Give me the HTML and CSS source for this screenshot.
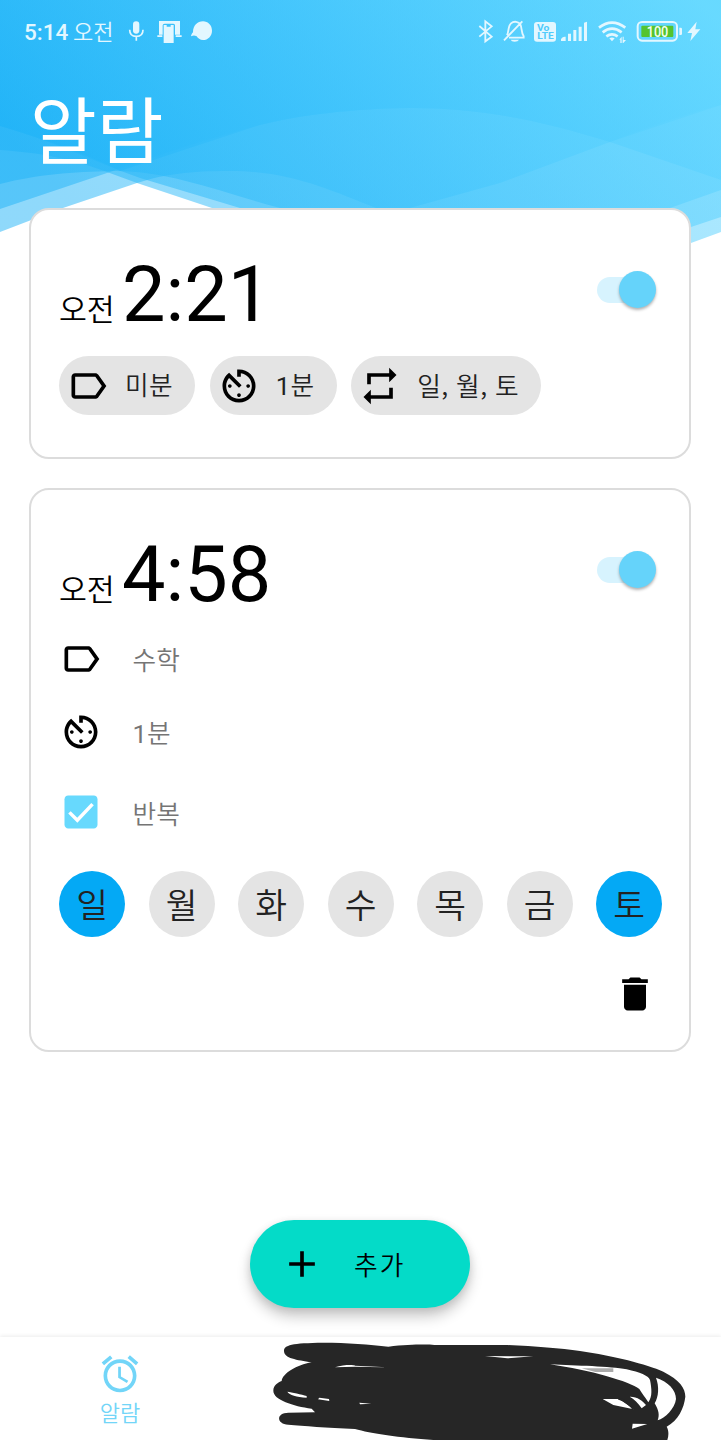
FILE: index.html
```html
<!DOCTYPE html>
<html lang="ko">
<head>
  <meta charset="UTF-8">
  <title>알람</title>
  <link rel="stylesheet" href="styles.css">
</head>
<body>
  <div class="screen">
    <!-- wave background -->
    <svg class="waves" viewBox="0 0 721 246">
      <defs>
        <linearGradient id="sky" gradientUnits="userSpaceOnUse" x1="0" y1="130" x2="415" y2="-285">
          <stop offset="0" stop-color="#20b3f7"/>
          <stop offset="0.5" stop-color="#43c6fc"/>
          <stop offset="1" stop-color="#66d9ff"/>
        </linearGradient>
      </defs>
      <g fill="url(#sky)" fill-opacity="0.5">
        <path d="M0 0H721V190L670 208L560 235H440L376 208C330 190 290 171 230 171C190 171 165 174 137 183L60 209L0 232Z"/>
        <path d="M0 0H721V232L691 243L600 246H300L212 208L137 183L107 172C70 158 40 153 0 150Z"/>
        <path d="M0 0H721V217L691 227L600 240H330L240 208L140 178C90 160 50 140 0 126Z"/>
        <path d="M0 0H721V180L610 142C540 120 480 108 410 108C350 109 300 115 260 125C200 141 160 155 107 173L0 209Z"/>
        <path d="M0 0H721V105C680 115 640 130 610 142L500 183L410 208L345 218L280 208C220 192 170 171 115 171C70 172 40 174 0 184Z"/>
      </g>
      <path fill="url(#sky)" fill-opacity="0.6" d="M0 0H721V105L610 142C540 120 480 108 410 108C350 109 300 115 260 125L120 171C90 155 40 138 0 126Z"/>
    </svg>

    <div class="statusbar">
      <span class="clock">5:14</span>
      <span class="ampm-small">오전</span>
      <svg class="st mic" width="17" height="25" viewBox="384 57 51 75">
        <rect x="399" y="64" width="19" height="37" rx="9.5" fill="currentColor"/>
        <path d="M389 89c0 13 8 20 20 20s20-7 20-20M409 109v13" fill="none" stroke="currentColor" stroke-width="5"/>
      </svg>
      <svg class="st phone" width="25" height="25" viewBox="471 57 75 75">
        <path d="M477 63H540V104H525V76Q525 71 520 71H494Q488 71 488 76V104H477Z" fill="currentColor"/>
        <path d="M472 106H487V111H472ZM527 106H545V111H527Z" fill="currentColor"/>
        <path d="M491 75h9v5h12v-5h9v54h-30z" fill="currentColor"/>
      </svg>
      <svg class="st blob" width="23" height="25" viewBox="570 57 69 75">
        <path d="M609 64c15 0 27 12 27 28s-12 28-27 28c-9 0-15-5-19-11-6-3-10-3-17 0 1-6 3-9 6-12C579 77 592 64 609 64z" fill="currentColor"/>
      </svg>

      <div class="status-right">
        <svg class="st" width="16" height="25" viewBox="354 57 48 75">
          <path d="M358 78L395 110L376 124V64L395 79L358 110" fill="none" stroke="currentColor" stroke-width="5.5"/>
        </svg>
        <svg class="st bell" width="23" height="25" viewBox="429 57 69 75">
          <path d="M441 106C446 98 444 78 453 70C462 62 476 65 481 73C486 82 483 96 491 109V113H447M432 121L487 64" fill="none" stroke="currentColor" stroke-width="5.5"/>
          <path d="M452 119H477Q474 125 464 125T452 119Z" fill="currentColor"/>
        </svg>
        <svg class="st volte" width="23" height="25" viewBox="522 57 69 75">
          <rect x="522" y="66" width="66" height="59" rx="9" fill="currentColor"/>
          <text x="531" y="92" textLength="37" lengthAdjust="spacingAndGlyphs">Vo</text>
          <text x="532" y="118" textLength="49" lengthAdjust="spacingAndGlyphs">LTE</text>
        </svg>
        <svg class="st signal" width="27" height="25" viewBox="603 57 81 75">
          <path d="M603 123v-6q5-7 11-7h3v13zM624 101h9v22h-9zM640 90h9v33h-9zM656 80h9v43h-9zM672 68l9-3v58h-9z" fill="currentColor"/>
        </svg>
        <svg class="st wifi" width="29" height="25" viewBox="714 57 87 75">
          <path d="M717 83Q756 53 796 83M728 97Q756 75 785 97M739 109Q756 97 773 109" fill="none" stroke="currentColor" stroke-width="8"/>
          <path d="M748 115Q756 110 764 115L756 124Z" fill="currentColor"/>
          <path d="M778 119l7-9v19h-4v-10zM788 110h3v10h7l-8 9h-2z" fill="currentColor"/>
        </svg>
        <svg class="st battery" width="47" height="25" viewBox="828 57 141 75">
          <rect x="833" y="66" width="118" height="56" rx="13" fill="none" stroke="currentColor" stroke-width="6"/>
          <rect x="844" y="77" width="96" height="34" rx="3" fill="#54c42f"/>
          <path d="M958 83h4q4 0 4 4v14q0 4-4 4h-4z" fill="currentColor"/>
          <text x="860" y="110" textLength="65" lengthAdjust="spacingAndGlyphs">100</text>
        </svg>
        <svg class="st bolt" width="14" height="25" viewBox="981 57 42 75">
          <path d="M1010 65L982 99H996L991 123L1021 88H1006Z" fill="currentColor"/>
        </svg>
      </div>
    </div>

    <h1 class="title">알람</h1>

    <div class="alarm-list">
      <div class="card card-closed">
        <div class="time-row">
          <span class="ampm">오전</span>
          <span class="time">2:21</span>
          <div class="switch"><div class="thumb"></div></div>
        </div>
        <div class="chips">
          <div class="chip">
            <svg class="icon" viewBox="0 0 24 24"><path d="M17.63 5.84C17.27 5.33 16.67 5 16 5L5 5.01C3.9 5.01 3 5.9 3 7v10c0 1.1.9 1.99 2 1.99L16 19c.67 0 1.27-.33 1.63-.84L22 12l-4.37-6.16zM16 17H5V7h11l3.55 5L16 17z"/></svg>
            <span>미분</span>
          </div>
          <div class="chip">
            <svg class="icon" viewBox="0 0 24 24"><path d="M11 17c0 .55.45 1 1 1s1-.45 1-1-.45-1-1-1-1 .45-1 1zm0-14v4h2V5.08c3.39.49 6 3.39 6 6.92 0 3.87-3.13 7-7 7s-7-3.13-7-7c0-1.68.59-3.22 1.58-4.42L12 13l1.41-1.41-6.8-6.8v.02C4.42 6.45 3 9.05 3 12c0 4.97 4.02 9 9 9 4.97 0 9-4.03 9-9s-4.03-9-9-9h-1zm7 9c0-.55-.45-1-1-1s-1 .45-1 1 .45 1 1 1 1-.45 1-1zM6 12c0 .55.45 1 1 1s1-.45 1-1-.45-1-1-1-1 .45-1 1z"/></svg>
            <span><b class="num">1</b>분</span>
          </div>
          <div class="chip">
            <svg class="icon" viewBox="0 0 24 24"><path d="M7 7h10v3l4-4-4-4v3H5v6h2V7zm10 10H7v-3l-4 4 4 4v-3h12v-6h-2v4z"/></svg>
            <span class="chip-days">일, 월, 토</span>
          </div>
        </div>
      </div>

      <div class="card card-open">
        <div class="time-row">
          <span class="ampm">오전</span>
          <span class="time">4:58</span>
          <div class="switch"><div class="thumb"></div></div>
        </div>
        <div class="options">
          <div class="option">
            <svg class="icon" viewBox="0 0 24 24"><path d="M17.63 5.84C17.27 5.33 16.67 5 16 5L5 5.01C3.9 5.01 3 5.9 3 7v10c0 1.1.9 1.99 2 1.99L16 19c.67 0 1.27-.33 1.63-.84L22 12l-4.37-6.16zM16 17H5V7h11l3.55 5L16 17z"/></svg>
            <span>수학</span>
          </div>
          <div class="option">
            <svg class="icon" viewBox="0 0 24 24"><path d="M11 17c0 .55.45 1 1 1s1-.45 1-1-.45-1-1-1-1 .45-1 1zm0-14v4h2V5.08c3.39.49 6 3.39 6 6.92 0 3.87-3.13 7-7 7s-7-3.13-7-7c0-1.68.59-3.22 1.58-4.42L12 13l1.41-1.41-6.8-6.8v.02C4.42 6.45 3 9.05 3 12c0 4.97 4.02 9 9 9 4.97 0 9-4.03 9-9s-4.03-9-9-9h-1zm7 9c0-.55-.45-1-1-1s-1 .45-1 1 .45 1 1 1 1-.45 1-1zM6 12c0 .55.45 1 1 1s1-.45 1-1-.45-1-1-1-1 .45-1 1z"/></svg>
            <span><b class="num">1</b>분</span>
          </div>
          <div class="option repeat">
            <svg class="icon check" viewBox="0 0 24 24"><path d="M19 3H5c-1.11 0-2 .9-2 2v14c0 1.1.89 2 2 2h14c1.11 0 2-.9 2-2V5c0-1.1-.89-2-2-2z"/><path class="tick" d="M5.7 12.2L10 16.5L18.3 7.7"/></svg>
            <span>반복</span>
          </div>
        </div>
        <div class="days">
          <div class="day on">일</div>
          <div class="day">월</div>
          <div class="day">화</div>
          <div class="day">수</div>
          <div class="day">목</div>
          <div class="day">금</div>
          <div class="day on">토</div>
        </div>
        <div class="delete-row">
          <svg class="icon" viewBox="0 0 24 24"><path d="M6 19c0 1.1.9 2 2 2h8c1.1 0 2-.9 2-2V7H6v12zM19 4h-3.5l-1-1h-5l-1 1H5v2h14V4z"/></svg>
        </div>
      </div>
    </div>

    <div class="add-row">
      <div class="add-button">
        <svg class="icon" viewBox="0 0 24 24"><path d="M19 13h-6v6h-2v-6H5v-2h6V5h2v6h6v2z"/></svg>
        <span>추가</span>
      </div>
    </div>

    <div class="navbar">
      <div class="nav-item">
        <svg class="icon" viewBox="0 0 24 24"><path d="M22 5.7l-4.6-3.9-1.3 1.5 4.6 3.9L22 5.7zM7.9 3.4L6.6 1.9 2 5.7l1.3 1.5 4.6-3.8zM12.5 8H11v6l4.7 2.9.8-1.2-4-2.4V8zM12 4c-5 0-9 4-9 9s4 9 9 9 9-4 9-9-4-9-9-9zm0 16c-3.9 0-7-3.1-7-7s3.1-7 7-7 7 3.1 7 7-3.1 7-7 7z"/></svg>
        <span>알람</span>
      </div>
      <!-- marker scribble over the other tabs -->
      <svg class="scribble" viewBox="0 0 1383 345">
        <path fill="#262626" d="M72 78C72 60 95 54 190 53C260 53 330 58 385 65C450 58 500 58 523 60L735 60C820 63 900 70 960 78C1060 92 1160 118 1210 140C1260 165 1276 190 1276 215C1272 250 1255 285 1220 305C1226 315 1227 330 1222 345L520 345C420 338 330 325 285 312C200 308 130 303 85 299C48 297 48 263 85 263L165 262L155 251C100 243 40 225 40 197C40 180 55 172 65 168C68 145 110 120 155 112C110 105 72 100 72 78Z"/>
        <g fill="#fff">
          <path d="M870 118C950 122 1050 124 1100 133C1140 142 1165 152 1170 165C1175 190 1178 215 1165 232C1155 215 1145 205 1138 192C1110 170 990 135 870 118Z"/>
          <path d="M1188 158C1225 170 1248 195 1248 222C1245 250 1215 280 1193 286C1199 270 1196 255 1184 235C1196 215 1198 185 1188 158Z"/>
          <path d="M675 93L820 94L742 100ZM1028 222H1078L1121 253L1060 240ZM1109 215C1130 214 1150 228 1158 240L1145 250C1135 235 1122 222 1109 215ZM1118 296L1162 297L1116 311Z"/>
          <path d="M82 200C95 202 125 208 140 213V218C110 216 88 210 82 200ZM174 223L178 218L207 222L208 228ZM298 233L334 236L300 238ZM225 127C250 119 280 119 285 122L380 127L285 125Z"/>
        </g>
        <path fill="#aaa" d="M965 130H1060V141H1006Z"/>
        <path fill="none" stroke="#262626" stroke-width="7" d="M1075 220Q1105 230 1121 253"/>
      </svg>
    </div>
  </div>
</body>
</html>
```
FILE: styles.css
```css
* {
  box-sizing: border-box;
}
body {
  margin: 0;
  padding: 0;
  background-color: #fff;
  font-family: Roboto, "Noto Sans CJK KR", sans-serif;
  color: #000;
}
svg {
  display: block;
  flex-shrink: 0;
}
.screen {
  position: relative;
  width: 721px;
  height: 1440px;
  overflow: hidden;
  display: flex;
  flex-direction: column;
}
.waves {
  position: absolute;
  top: 0;
  left: 0;
  width: 721px;
  height: 246px;
}

/* status bar */
.statusbar {
  position: relative;
  display: flex;
  align-items: center;
  height: 44px;
  padding: 19px 20px 0 24px;
  color: #e3f7ff;
  line-height: 25px;
}
.clock {
  width: 49px;
  padding-top: 1px;
  font-size: 22.5px;
  font-weight: 500;
}
.ampm-small {
  width: 55px;
  padding-top: 1px;
  font-size: 22px;
  font-weight: 350;
}
.phone {
  margin-left: 12px;
}
.blob {
  margin-left: 8px;
}
.status-right {
  display: flex;
  margin-left: auto;
}
.bell {
  margin-left: 9px;
}
.volte {
  margin-left: 8px;
}
.volte text {
  font-size: 29px;
  font-weight: 700;
  fill: #50cbfc;
}
.signal {
  margin-left: 4px;
}
.wifi {
  margin-left: 10px;
}
.battery {
  margin-left: 9px;
}
.battery text {
  font-size: 45px;
  font-weight: 500;
  fill: #f2fff0;
}
.bolt {
  margin-left: 4px;
}

.title {
  position: relative;
  height: 164px;
  margin: 0;
  padding: 38px 0 0 30px;
  font-size: 72.5px;
  font-weight: 400;
  line-height: 104px;
  color: #fff;
}

/* alarm cards */
.alarm-list {
  position: relative;
  display: flex;
  flex-direction: column;
  gap: 29px;
  padding: 0 30px 0 29px;
}
.card {
  background-color: #fff;
  border: 2px solid #dcdcdc;
  border-radius: 20px;
  padding: 37px 27px 0 28px;
}
.card-closed {
  height: 251px;
}
.card-open {
  height: 564px;
}
.time-row {
  display: flex;
  align-items: baseline;
  height: 94px;
}
.ampm {
  width: 63px;
  font-size: 30.3px;
  font-weight: 350;
}
.time {
  font-size: 77.4px;
  line-height: 95px;
}
.switch {
  align-self: flex-start;
  width: 52px;
  height: 26px;
  margin: 29.5px 13.5px 0 auto;
  border-radius: 13px;
  background-color: #d7f3fe;
  display: flex;
  align-items: center;
  justify-content: flex-end;
}
.thumb {
  width: 37px;
  height: 37px;
  margin-right: -7px;
  flex-shrink: 0;
  border-radius: 50%;
  background-color: #65d3fa;
  box-shadow: 0 2px 3px rgba(0, 0, 0, 0.3);
}
.icon {
  width: 44px;
  height: 44px;
  fill: #000;
}
.num {
  font-weight: 400;
}
.chips {
  display: flex;
  gap: 14.5px;
  margin-top: 15px;
}
.chip {
  display: flex;
  align-items: center;
  height: 59px;
  padding: 0 22px 0 7px;
  border-radius: 30px;
  background-color: #e4e4e4;
  color: #222;
  font-size: 25.7px;
  font-weight: 350;
  letter-spacing: 0.45px;
  line-height: 59px;
}
.chip span {
  margin-left: 15px;
  padding-top: 2px;
}
.chip .chip-days {
  padding-top: 0;
  margin-top: -2px;
  font-family: "Noto Sans CJK KR", sans-serif;
  letter-spacing: 0.4px;
}
.options {
  margin: 1px 0 0 -0.5px;
}
.option {
  display: flex;
  align-items: center;
  height: 73px;
  color: #757575;
  font-size: 25.7px;
  font-weight: 350;
}
.option span {
  margin-left: 30px;
}
.repeat {
  height: 88px;
}
.check {
  fill: #67d9fd;
}
.tick {
  fill: none;
  stroke: #fff;
  stroke-width: 1.9;
}
.days {
  display: flex;
  justify-content: space-between;
  margin-top: 15px;
}
.day {
  width: 66px;
  height: 66px;
  padding-top: 2px;
  border-radius: 50%;
  background-color: #e4e4e4;
  color: #222;
  font-size: 34.5px;
  font-weight: 350;
  line-height: 66px;
  text-align: center;
}
.on {
  background-color: #04a9f5;
}
.delete-row {
  display: flex;
  justify-content: flex-end;
  padding: 35px 5px 0 0;
}

/* add button */
.add-row {
  display: flex;
  justify-content: center;
  padding-right: 1px;
  margin-top: 168px;
}
.add-button {
  display: flex;
  align-items: center;
  width: 220px;
  height: 88px;
  padding-left: 30px;
  border-radius: 44px;
  background-color: #04dbc8;
  box-shadow: 0 9px 14px rgba(0, 0, 0, 0.2), 0 2px 8px rgba(0, 0, 0, 0.1);
  font-size: 25.7px;
  font-weight: 350;
  letter-spacing: 2px;
}
.add-button span {
  margin: -2px 0 0 30px;
}

/* bottom navigation */
.navbar {
  position: relative;
  height: 103px;
  margin-top: auto;
  background-color: #fff;
  box-shadow: 0 -1px 4px rgba(0, 0, 0, 0.08);
}
.nav-item {
  display: flex;
  flex-direction: column;
  align-items: center;
  width: 240px;
  padding-top: 15px;
  color: #72d5f8;
  font-size: 22px;
  font-weight: 350;
  line-height: 35px;
}
.nav-item .icon {
  fill: #72d5f8;
}
.scribble {
  position: absolute;
  left: 260px;
  bottom: 0;
  width: 461px;
  height: 115px;
}
```
